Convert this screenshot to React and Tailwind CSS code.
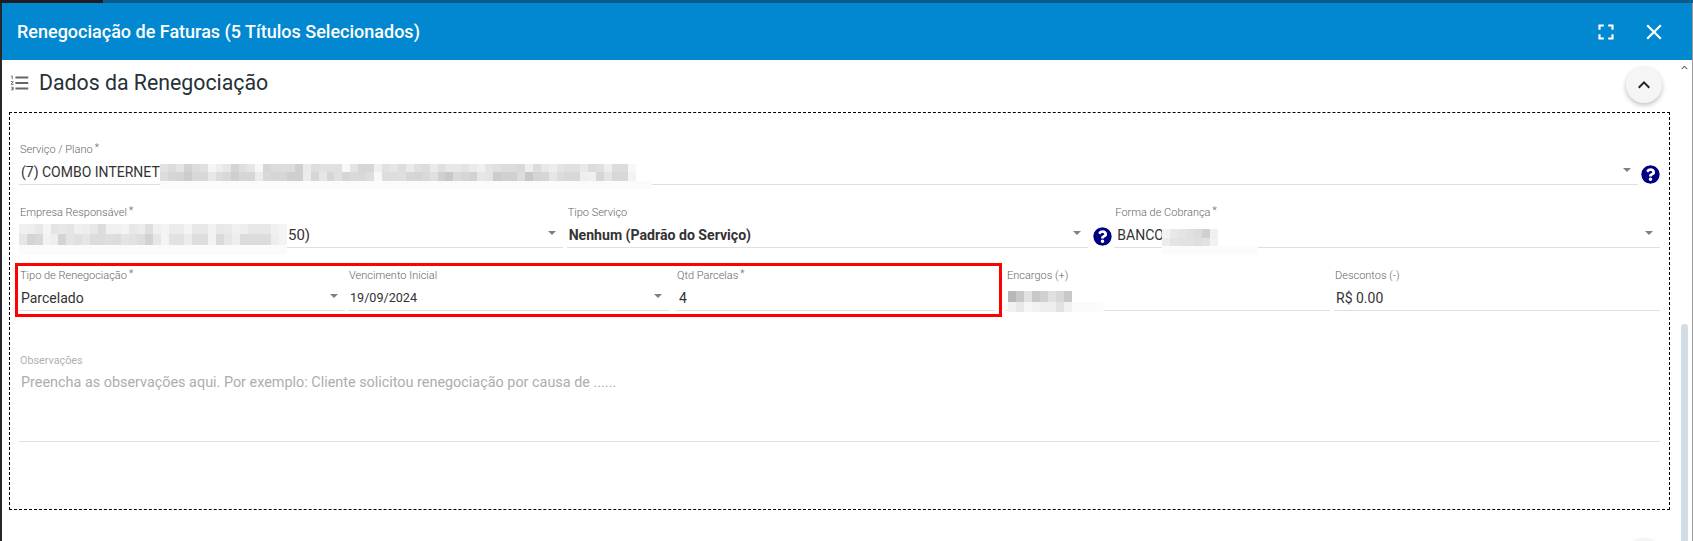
import React from 'react';
import { MdClose, MdFormatListNumbered, MdFullscreen, MdKeyboardArrowUp } from 'react-icons/md';
import { FaQuestionCircle, FaChevronUp } from 'react-icons/fa';

// grey levels of the pixelated (censored) areas, one string per row, two hex digits per cell
const planoBlur = [
  'e2dce4d2dce0f5eee6d4dfe6f7d6dcdcdccfeadde1e1e0f8e4d6d6efe1e6ddeadfdcea e0e8e8e3eaf0e4e0dcdcd9eedce8eee4e0e0e8dce0eedcdcf8',
  'ddd6d4ccd8d8e8dcd8cfd6d6ecd8d6d6cfcfecd6e6d6e0d6dad8ddf8dddddfd6d4d9e0 d0c8dad6d2e6e4ccd0d0dcc8d4d6e6dcd8d8eef0d6e4d8d8f3',
  'fbfbfbfbfbfbfbfbfbfbfbfbfbfbfbfbfbfbfbfbfbfbfbfbfbfbfbfbfbfbfbfbfbfbfb fbfbfbfbfbfbfbfbfbfbfbfbfbfbfbfbfbfbfbfbfbfbfbfbfbfbfb',
];
const empresaBlur = [
  'f0eee8f4e4e8e4f0eee8dcf0f0f4e8ecdff0f4ececf4e8e8f2e8eaf0eee8e8e8f0f4',
  'e6d4d8f2eed4e4e0e6dcdcdedce4e2ded2e6f4e2e2ecdedef2dae6eedcdcdcdceef4',
  'fbfbfbfbfbfbfbfbfbfbfbfbfbfbfbfbfbfbfbfbfbfbfbfbfbfbfbfbfbfbfbfbfbfb',
];
const bancoBlur = [
  'f4e8e4e0dcd0f0ffff',
  'ece4e2e2dee2f2ffff',
  'fbfbfbfbfbfbfbfbfbfbfbfb',
];
const encargosBlur = [
  'b8c8e2c8d0e0d8c8',
  'f0e8f6f2eeeee2f0fafafafc',
];

function Mosaic({ rows, heights, cell = 8, className }) {
  const width = Math.max(...rows.map((r) => r.replace(/ /g, '').length / 2)) * cell;
  const height = heights.reduce((a, b) => a + b, 0);
  let y = 0;
  return (
    <svg width={width} height={height} shapeRendering="crispEdges" className={className}>
      {rows.map((row, i) => {
        const cells = row.replace(/ /g, '').match(/../g);
        const top = y;
        y += heights[i];
        return cells.map((c, j) => (
          <rect key={j} x={j * cell} y={top} width={cell} height={heights[i]} fill={`#${c}${c}${c}`} />
        ));
      })}
    </svg>
  );
}

function Arrow() {
  return (
    <svg width="8" height="4" viewBox="0 0 8 4" className="shrink-0 mr-[7px] mb-[6px]">
      <path d="M0 0h8L4 4z" fill="#808080" />
    </svg>
  );
}

function Help() {
  return <FaQuestionCircle size={19} color="#000080" className="shrink-0 bg-white rounded-full" />;
}

function Field({ label, required, select, className, valueClass, children, over }) {
  return (
    <div className={`relative h-[44px] border-b border-[#e0e0e0] ${className}`}>
      <div className="h-[16px] pl-[1px] pt-[1px] text-[11px] font-light leading-[16px] text-[#666]">
        {label}
        {required && <span className="relative top-[-2px] ml-[2px] text-[10px]">*</span>}
      </div>
      <div className="flex h-[27px] items-center pt-[4px]">
        <div className={`flex-1 whitespace-nowrap pl-[2px] text-[#333] ${valueClass || 'text-[14px]'}`}>{children}</div>
        {select && <Arrow />}
      </div>
      {over}
    </div>
  );
}

export default function App() {
  return (
    <div className="relative h-[541px] w-full overflow-hidden bg-[#26262c] font-['Roboto',sans-serif]">
      <div className="flex h-[3px]">
        <div className="w-[103px] bg-[#1d1d22]" />
        <div className="flex-1 bg-[#0b5c8c]" />
      </div>
      <div className="ml-[2px] mr-[1px] flex h-[538px] flex-col bg-white">
        <header className="flex h-[57px] shrink-0 items-center bg-[#0288d1] pl-[15px] pr-[25px] text-white">
          <h1 className="flex-1 text-[18px] font-medium">Renegociação de Faturas (5 Títulos Selecionados)</h1>
          <MdFullscreen size={26} className="mr-[22px]" />
          <MdClose size={26} />
        </header>

        <div className="flex min-h-0 flex-1">
          <div className="min-w-0 flex-1">
            <div className="flex h-[52px] items-start pl-[7px] pr-[19px]">
              <MdFormatListNumbered size={22} color="#666" className="mt-[12px]" />
              <h2 className="ml-[8px] mt-[7px] flex-1 text-[21.3px] leading-[32px] text-[#263238]">Dados da Renegociação</h2>
              <button className="mt-[7px] flex h-[36px] w-[36px] items-center justify-center rounded-full bg-[#f5f5f5] shadow-[0_2px_5px_rgba(0,0,0,0.26)]">
                <MdKeyboardArrowUp size={24} color="#222" />
              </button>
            </div>

            <section className="ml-[7px] w-[1661px] h-[398px] border border-dashed border-black px-[9px] pt-[28px]">
              <div className="flex items-start justify-between">
                <Field
                  label="Serviço / Plano"
                  required
                  select
                  className="w-[1619px]"
                  over={<Mosaic rows={planoBlur} heights={[8, 9, 8]} cell={7.93} className="absolute left-[141px] top-[23px]" />}
                >
                  (7) COMBO INTERNET
                </Field>
                <span className="mt-[24px]"><Help /></span>
              </div>

              <div className="mt-[19px] flex">
                <Field
                  label="Empresa Responsável"
                  required
                  select
                  className="w-[544px]"
                  over={<Mosaic rows={empresaBlur} heights={[10, 11, 10]} cell={7.88} className="absolute left-0 top-[20px]" />}
                >
                  <span className="pl-[267px] text-[15px]">50)</span>
                </Field>
                <Field label="Tipo Serviço" select className="ml-[4px] w-[522px]" valueClass="text-[14.1px] font-bold">
                  Nenhum (Padrão do Serviço)
                </Field>
                <span className="ml-[5px] mt-[23px]"><Help /></span>
                <Field
                  label="Forma de Cobrança"
                  required
                  select
                  className="ml-[2px] w-[546px]"
                  valueClass="pl-[3px] text-[14px]"
                  over={<Mosaic rows={bancoBlur} heights={[9, 8, 8]} className="absolute left-[48px] top-[25px]" />}
                >
                  BANCO
                </Field>
              </div>

              <div className="mt-[19px] flex">
                <div className="relative flex w-[976px]">
                  <Field label="Tipo de Renegociação" required select className="w-[326px]">
                    Parcelado
                  </Field>
                  <Field label="Vencimento Inicial" select className="ml-[3px] w-[321px]" valueClass="text-[12.6px]">
                    19/09/2024
                  </Field>
                  <Field label="Qtd Parcelas" required className="ml-[7px] w-[319px]" valueClass="pl-[3px] text-[14px]">
                    4
                  </Field>
                  <div className="pointer-events-none absolute left-[-4px] top-[-4px] h-[54px] w-[987px] border-[3px] border-[#ff0000]" />
                </div>
                <Field
                  label="Encargos (+)"
                  className="ml-[11px] w-[324px]"
                  over={<Mosaic rows={encargosBlur} heights={[11, 10]} className="absolute left-[2px] top-[24px]" />}
                >
                  {' '}
                </Field>
                <Field label="Descontos (-)" className="ml-[4px] w-[326px]">
                  R$ 0.00
                </Field>
              </div>

              <div className="mt-[41px] h-[90px] border-b border-[#e0e0e0]">
                <div className="h-[16px] pl-[1px] pt-[1px] text-[10.8px] leading-[16px] text-[#b0b0b0]">Observações</div>
                <div className="mt-[5px] pl-[2px] text-[14.4px] leading-[20px] text-[#adadad]">
                  Preencha as observações aqui. Por exemplo: Cliente solicitou renegociação por causa de ......
                </div>
              </div>
            </section>

            <div className="mt-[29px] flex justify-end pr-[19px]">
              <div className="h-[36px] w-[36px] rounded-full bg-[#f5f5f5] shadow-[0_2px_5px_rgba(0,0,0,0.26)]" />
            </div>
          </div>

          <aside className="flex w-[11px] shrink-0 flex-col pr-[4px]">
            <FaChevronUp size={7} color="#666" className="mt-[4px] w-[7px]" />
            <div className="mt-[253px] flex-1 rounded-t-[3px] bg-[#d3dde6]" />
          </aside>
        </div>
      </div>
      <div className="absolute bottom-0 right-0 top-[3px] w-[1px] bg-[#9a9a9a]" />
    </div>
  );
}
